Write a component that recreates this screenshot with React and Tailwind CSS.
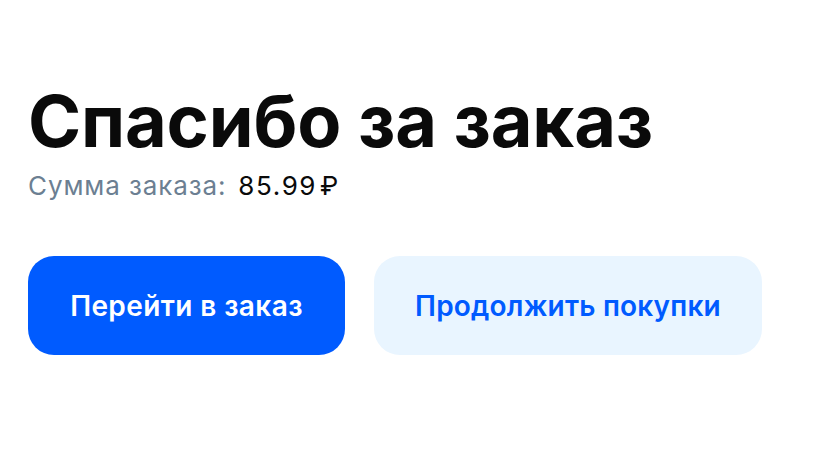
export default function App() {
  return (
    <div className="w-[840px] h-[449px] bg-white font-['Inter',sans-serif]">
      <div className="pl-7 pt-[82px]">
        <h1 className="text-[72px] leading-[78px] font-bold tracking-[-0.2px] text-[#0a0a0a]">
          Спасибо за заказ
        </h1>
        <div className="mt-[10px] flex items-baseline gap-3 text-[26px] leading-8">
          <span className="tracking-[0.9px] text-[#6c7f92]">Сумма заказа:</span>
          <span className="tracking-[1.6px] text-[#0a0a0a]">
            85.99<span className="ml-[3px]">₽</span>
          </span>
        </div>
        <div className="mt-[54px] flex gap-[29px]">
          <button className="h-[99px] w-[317px] rounded-[26px] bg-[#005bff] text-[28px] font-semibold tracking-[0.4px] text-white">
            Перейти в заказ
          </button>
          <button className="h-[99px] w-[388px] rounded-[26px] bg-[#e9f5ff] text-[28px] font-semibold tracking-[0.2px] text-[#005bff]">
            Продолжить покупки
          </button>
        </div>
      </div>
    </div>
  );
}
